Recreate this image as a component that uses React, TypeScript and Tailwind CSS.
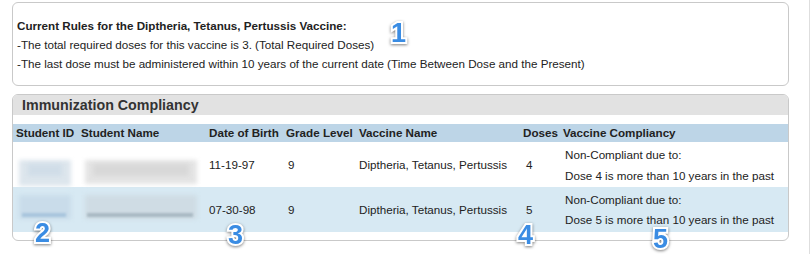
import React from "react";

const font = { fontFamily: '"Liberation Sans", Arial, Helvetica, sans-serif' };

function Badge({ n, cls }: { n: string; cls: string }) {
  return (
    <span
      className={`absolute text-[27px] leading-none font-bold text-[#3a8ce3] [-webkit-text-stroke:4px_white] [paint-order:stroke_fill] [filter:drop-shadow(0_1px_1.5px_rgba(0,0,0,0.5))] ${cls}`}
    >
      {n}
    </span>
  );
}

const cols = "grid grid-cols-[65px_128px_77px_73px_164px_40px_1fr]";

export default function App() {
  return (
    <div className="w-[812px] h-[254px] bg-white relative overflow-hidden text-[11.65px] text-[#222]" style={font}>
      <div className="w-[810px] h-full border-r border-[#dedede] pt-[2px] pl-[12px] pr-[20px]">
        <div className="h-[84px] rounded-[6px] border border-[#c9c9c9] px-[4px] flex flex-col justify-center leading-[19px]">
          <div className="font-bold">Current Rules for the Diptheria, Tetanus, Pertussis Vaccine:</div>
          <div>-The total required doses for this vaccine is 3. (Total Required Doses)</div>
          <div>-The last dose must be administered within 10 years of the current date (Time Between Dose and the Present)</div>
        </div>

        <div className="mt-[8px] h-[147px] rounded-[6px] border border-[#c9c9c9] overflow-hidden flex flex-col">
          <div className="h-[20px] bg-[#e2e2e2] pl-[9px] text-[14.25px] font-bold leading-[20px] text-[#333]">
            Immunization Compliancy
          </div>
          <div className="h-[9px]" />
          <div className={`${cols} h-[18px] bg-[#bdd5e7] font-bold leading-[18px] pl-[3px]`}>
            <div>Student ID</div>
            <div>Student Name</div>
            <div>Date of Birth</div>
            <div>Grade Level</div>
            <div>Vaccine Name</div>
            <div>Doses</div>
            <div>Vaccine Compliancy</div>
          </div>
          <div className={`${cols} h-[45px] items-center pl-[3px] bg-white`}>
            <div className="relative h-full">
              <div className="absolute left-[3px] top-[18px] w-[52px] h-[26px] bg-[#dde6ed] blur-[2px]" />
              <div className="absolute left-[12px] top-[22px] w-[34px] h-[12px] bg-[#d0dde8] blur-[2px]" />
            </div>
            <div className="relative h-full">
              <div className="absolute left-[4px] top-[18px] w-[112px] h-[24px] bg-[#e4e4e4] blur-[2px]" />
              <div className="absolute left-[12px] top-[22px] w-[96px] h-[12px] bg-[#d8d8d8] blur-[2px]" />
            </div>
            <div className="pt-[1px]">11-19-97</div>
            <div className="pl-[2px] pt-[1px]">9</div>
            <div className="pt-[1px]">Diptheria, Tetanus, Pertussis</div>
            <div className="pl-[3px] pt-[1px]">4</div>
            <div className="pl-[2px] leading-[21px]">
              <div>Non-Compliant due to:</div>
              <div>Dose 4 is more than 10 years in the past</div>
            </div>
          </div>
          <div className={`${cols} h-[45px] items-center pl-[3px] bg-[#d7e9f3]`}>
            <div className="relative h-full">
              <div className="absolute left-[3px] top-[8px] w-[52px] h-[24px] bg-[#c9dcea] blur-[2px]" />
              <div className="absolute left-[6px] top-[26px] w-[44px] h-[4px] bg-[#a8c5dc] blur-[1px]" />
            </div>
            <div className="relative h-full">
              <div className="absolute left-[4px] top-[8px] w-[112px] h-[24px] bg-[#cfdce4] blur-[2px]" />
              <div className="absolute left-[6px] top-[26px] w-[106px] h-[4px] bg-[#a9b9c3] blur-[1px]" />
            </div>
            <div className="pt-[1px]">07-30-98</div>
            <div className="pl-[2px] pt-[1px]">9</div>
            <div className="pt-[1px]">Diptheria, Tetanus, Pertussis</div>
            <div className="pl-[3px] pt-[1px]">5</div>
            <div className="pl-[2px] leading-[20px]">
              <div>Non-Compliant due to:</div>
              <div>Dose 5 is more than 10 years in the past</div>
            </div>
          </div>
        </div>
      </div>

      <Badge n="1" cls="left-[391px] top-[20px]" />
      <Badge n="2" cls="left-[35px] top-[220px]" />
      <Badge n="3" cls="left-[228px] top-[222px]" />
      <Badge n="4" cls="left-[518px] top-[222px]" />
      <Badge n="5" cls="left-[653px] top-[226px]" />
    </div>
  );
}
